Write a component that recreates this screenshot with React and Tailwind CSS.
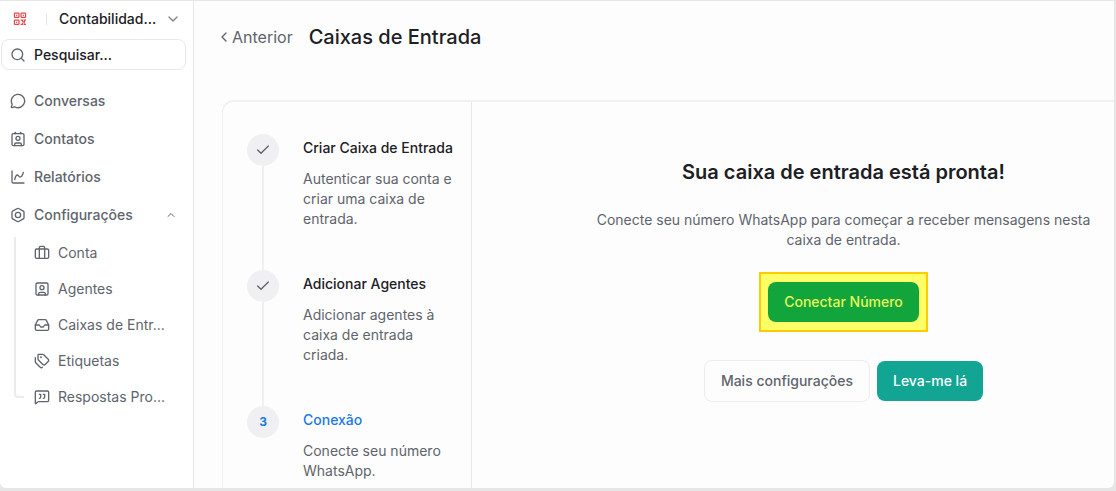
import React from 'react';
import {
    Bolt,
    Briefcase,
    ChartSpline,
    Check,
    ChevronDown,
    ChevronLeft,
    ChevronUp,
    Contact,
    Inbox,
    MessageCircle,
    MessageSquareQuote,
    Search,
    SquareUser,
    Tags,
} from 'lucide-react';

const mainLinks = [
    { label: 'Conversas', icon: MessageCircle },
    { label: 'Contatos', icon: Contact },
    { label: 'Relatórios', icon: ChartSpline },
];

const settingsLinks = [
    { label: 'Conta', icon: Briefcase },
    { label: 'Agentes', icon: SquareUser },
    { label: 'Caixas de Entr...', icon: Inbox },
    { label: 'Etiquetas', icon: Tags },
    { label: 'Respostas Pro...', icon: MessageSquareQuote },
];

const steps = [
    { title: 'Criar Caixa de Entrada', text: 'Autenticar sua conta e criar uma caixa de entrada.', done: true },
    { title: 'Adicionar Agentes', text: 'Adicionar agentes à caixa de entrada criada.', done: true },
    { title: 'Conexão', text: 'Conecte seu número WhatsApp.', done: false },
];

function Logo() {
    return (
        <svg width="14" height="14" viewBox="0 0 14 14" fill="none" stroke="#e5484d" strokeWidth="1.2" aria-hidden="true">
            <rect x="1.4" y="1.2" width="4.6" height="4.2" rx="0.6" />
            <rect x="8" y="1.2" width="4.6" height="4.2" rx="0.6" />
            <rect x="1.4" y="8.2" width="4.6" height="4.2" rx="0.6" />
            <path d="M3.1 3.3h1.2M9.7 3.3h1.2M3.1 10.3h1.2" />
            <path d="M7.6 8.2h2v1.6M13 8.2h-1.6v2h-1.8M7.6 12.4h2v-1.4M13 12.4h-1.6v-1.2" />
        </svg>
    );
}

function Sidebar() {
    return (
        <aside className="w-[194px] shrink-0 border-r border-[#e8e8ec] bg-white">
            <div className="flex h-9 items-center pl-[13px] pr-3">
                <Logo />
                <span className="ml-[19px] h-3 w-px bg-[#e4e4e7]" />
                <button type="button" className="ml-3 flex flex-1 items-center justify-between text-sm font-medium text-[#1c2024]">
                    Contabilidad...
                    <ChevronDown size={16} strokeWidth={2} className="text-[#80838d]" />
                </button>
            </div>

            <label className="ml-px mr-[7px] mt-0.5 flex h-[31px] items-center gap-2 rounded-lg border border-[#e8e8ec] pl-2">
                <Search size={16} strokeWidth={2} className="shrink-0 text-[#60646c]" />
                <input
                    type="text"
                    aria-label="Pesquisar"
                    placeholder="Pesquisar..."
                    className="w-full min-w-0 bg-transparent text-sm font-medium outline-none placeholder:text-[#1c2024]"
                />
            </label>

            <nav className="mt-[15px]">
                <ul className="flex flex-col gap-1.5 pl-[10px] text-sm font-medium text-[#60646c]">
                    {mainLinks.map(({ label, icon: Icon }) => (
                        <li key={label}>
                            <a href="#" className="flex h-8 items-center gap-2">
                                <Icon size={16} strokeWidth={2} />
                                {label}
                            </a>
                        </li>
                    ))}
                    <li>
                        <a href="#" className="flex h-8 items-center gap-2 pr-4">
                            <Bolt size={16} strokeWidth={2} />
                            <span className="flex-1">Configurações</span>
                            <ChevronUp size={12} strokeWidth={2} />
                        </a>
                    </li>
                </ul>

                <div className="ml-[14px] mt-1.5 flex">
                    <span className="h-[161px] w-[10px] shrink-0 rounded-bl border-b-2 border-l-2 border-[#ebebef]" />
                    <ul className="ml-[10px] flex flex-col gap-1 text-sm text-[#60646c]">
                        {settingsLinks.map(({ label, icon: Icon }) => (
                            <li key={label}>
                                <a href="#" className="flex h-8 items-center gap-2 whitespace-nowrap">
                                    <Icon size={16} strokeWidth={2} className="shrink-0" />
                                    {label}
                                </a>
                            </li>
                        ))}
                    </ul>
                </div>
            </nav>
        </aside>
    );
}

function Steps() {
    return (
        <ol className="w-[249px] shrink-0 border-r border-[#e8e8ec] pl-6 pr-4 pt-8">
            {steps.map((step, index) => (
                <li key={step.title} className="flex gap-6">
                    <div className="flex flex-col items-center">
                        <span className="flex size-8 shrink-0 items-center justify-center rounded-full bg-[#f0f0f3] text-xs font-bold text-[#2079e8]">
                            {step.done ? <Check size={16} strokeWidth={2} className="text-[#60646c]" /> : index + 1}
                        </span>
                        {index < steps.length - 1 && <span className="w-[2px] flex-1 bg-[#f0f0f3]" />}
                    </div>
                    <div className={index < steps.length - 1 ? 'min-h-[136px] pt-1' : 'pt-1'}>
                        <h3 className={step.done ? 'text-sm font-medium text-[#1c2024]' : 'text-sm font-medium text-[#2079e8]'}>
                            {step.title}
                        </h3>
                        <p className="mt-[11px] text-sm text-[#60646c]">{step.text}</p>
                    </div>
                </li>
            ))}
        </ol>
    );
}

function Finish() {
    return (
        <section className="flex flex-1 flex-col items-center pl-[101px] pt-14 text-center">
            <h2 className="text-xl font-semibold leading-7 text-[#1c2024]">Sua caixa de entrada está pronta!</h2>
            <p className="mt-6 max-w-[508px] text-sm text-[#60646c]">
                Conecte seu número WhatsApp para começar a receber mensagens nesta caixa de entrada.
            </p>
            <div className="mt-[22px] border-2 border-[#ffcb05] bg-[#ffff66] px-[7px] py-2">
                <button type="button" className="h-10 rounded-lg bg-[#12a53c] px-4 text-sm font-medium text-[#e6f75a]">
                    Conectar Número
                </button>
            </div>
            <div className="mt-7 flex items-center gap-[7px]">
                <button type="button" className="h-[42px] rounded-lg border border-[#ededf0] px-4 text-sm font-medium text-[#60646c]">
                    Mais configurações
                </button>
                <button type="button" className="h-10 rounded-lg bg-[#12a594] px-4 text-sm font-medium text-white">
                    Leva-me lá
                </button>
            </div>
        </section>
    );
}

export default function App() {
    return (
        <div className="flex h-screen bg-[#e6e6e6] pb-[3px] pr-[2px] pt-px font-['Inter',sans-serif]">
            <div className="flex min-w-0 flex-1 overflow-hidden rounded-b-md bg-[#fdfdfd]">
                <Sidebar />
                <main className="flex min-w-0 flex-1 flex-col pl-7">
                    <header className="flex h-[71px] items-center gap-4">
                        <button type="button" className="-ml-1.5 flex items-center text-base text-[#60646c]">
                            <ChevronLeft size={16} strokeWidth={2} />
                            Anterior
                        </button>
                        <h1 className="text-xl font-medium text-[#1c2024]">Caixas de Entrada</h1>
                    </header>
                    <div className="mt-7 flex min-h-0 flex-1 rounded-tl-xl border-l border-t-2 border-[#f0f0f2]">
                        <Steps />
                        <Finish />
                    </div>
                </main>
            </div>
        </div>
    );
}
